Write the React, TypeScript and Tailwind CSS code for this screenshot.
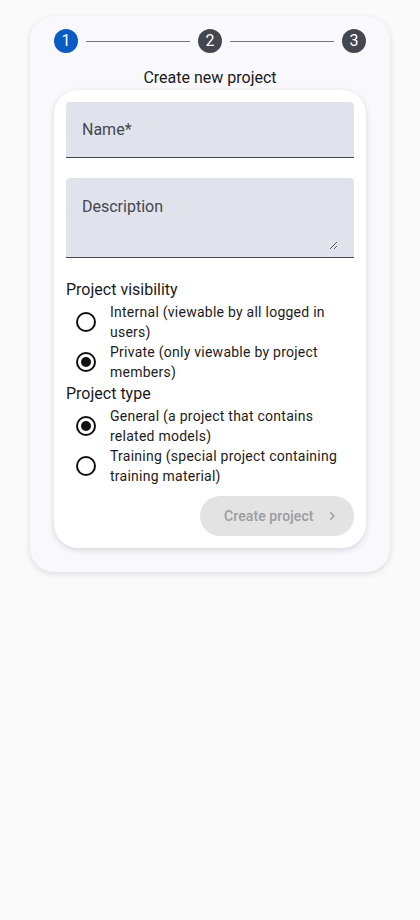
import React from "react";

function Radio({ checked }: { checked?: boolean }) {
  return (
    <div className="w-10 h-10 flex items-center justify-center shrink-0">
      <div className="w-5 h-5 rounded-full border-2 border-[#111111] flex items-center justify-center">
        {checked && <div className="w-[10px] h-[10px] rounded-full bg-[#111111]" />}
      </div>
    </div>
  );
}

function Option({ checked, label }: { checked?: boolean; label: string }) {
  return (
    <div className="flex items-center">
      <Radio checked={checked} />
      <div className="ml-1 w-[244px] text-[14px] leading-5 tracking-[0.25px] text-[#1d1b20]">{label}</div>
    </div>
  );
}

function Step({ n, active }: { n: number; active?: boolean }) {
  return (
    <div
      className={
        "w-6 h-6 rounded-full flex items-center justify-center text-white text-[16px] leading-none shrink-0 " +
        (active ? "bg-[#0a5bc2]" : "bg-[#45464f]")
      }
    >
      {n}
    </div>
  );
}

export default function App() {
  return (
    <div
      className="min-h-[920px] bg-[#fafafa] pt-4"
      style={{ fontFamily: "Roboto, 'Noto Sans', sans-serif" }}
    >
      <div className="mx-[30px] w-[360px] rounded-[24px] bg-[#f8f8fd] shadow-[0_2px_6px_rgba(0,0,0,0.12)] px-6 pt-[13px] pb-6">
        <div className="flex items-center gap-2">
          <Step n={1} active />
          <div className="flex-1 h-px bg-[#74777f]" />
          <Step n={2} />
          <div className="flex-1 h-px bg-[#74777f]" />
          <Step n={3} />
        </div>
        <div className="mt-[13px] text-center text-[16px] leading-6 text-[#1a1a1a]">Create new project</div>
        <div className="rounded-[24px] bg-white shadow-[0_2px_6px_rgba(0,0,0,0.14)] p-3 flex flex-col">
          <div className="h-[56px] rounded-t-[4px] bg-[#e0e2ec] border-b border-[#44474e] flex items-center px-4">
            <input
              className="w-full bg-transparent outline-none text-[16px] text-[#1d1b20] placeholder:text-[#44474e]"
              placeholder="Name*"
            />
          </div>
          <div className="mt-5 h-[80px] rounded-t-[4px] bg-[#e0e2ec] border-b border-[#44474e] pl-4 pr-4 pt-[17px]">
            <textarea
              className="block w-full h-[55px] bg-transparent outline-none text-[16px] leading-6 text-[#1d1b20] placeholder:text-[#44474e] resize-y"
              placeholder="Description"
            />
          </div>
          <div className="mt-5 text-[16px] leading-6 text-[#1a1a1a]">Project visibility</div>
          <Option label="Internal (viewable by all logged in users)" />
          <Option checked label="Private (only viewable by project members)" />
          <div className="text-[16px] leading-6 text-[#1a1a1a]">Project type</div>
          <Option checked label="General (a project that contains related models)" />
          <Option label="Training (special project containing training material)" />
          <button className="mt-[10px] self-end h-10 w-[154px] rounded-full bg-[#e3e3e4] flex items-center pl-6 text-[14px] font-medium tracking-[0.1px] text-[#9c9c9e]">
            Create project
            <svg className="ml-[10px]" width="16" height="16" viewBox="0 0 24 24" fill="none" stroke="#9c9c9e" strokeWidth="2.2" strokeLinecap="round" strokeLinejoin="round">
              <path d="M10 7l5 5-5 5" />
            </svg>
          </button>
        </div>
      </div>
    </div>
  );
}
